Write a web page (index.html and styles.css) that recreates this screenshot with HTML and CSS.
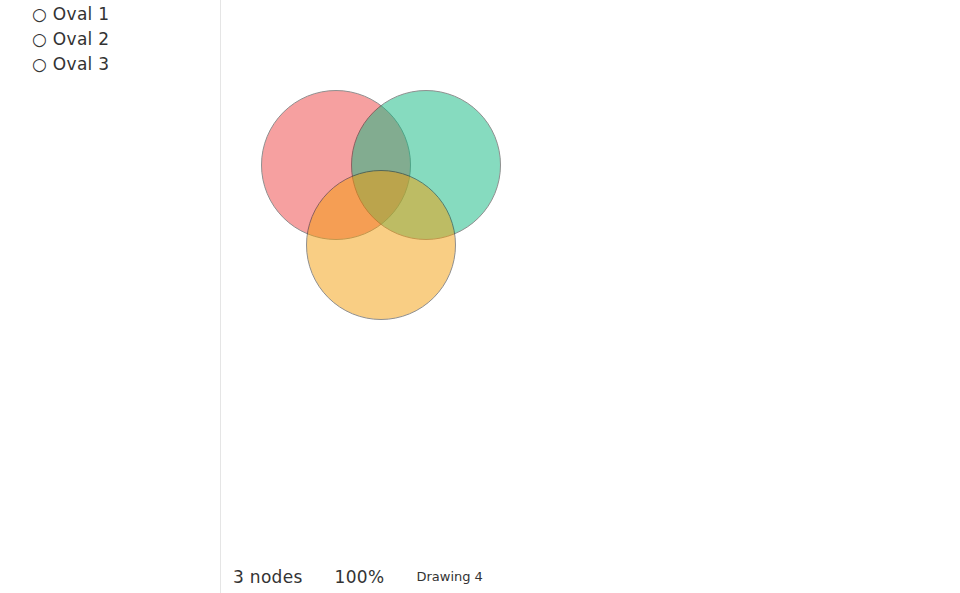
FILE: index.html
```html
<!DOCTYPE html>
<html>
<head>
<meta charset="utf-8">
<link rel="stylesheet" href="styles.css">
</head>
<body>
<div class="app">
  <aside class="sidebar">
    <ul class="layers">
      <li>○ Oval 1</li>
      <li>○ Oval 2</li>
      <li>○ Oval 3</li>
    </ul>
  </aside>
  <main class="main">
    <div class="canvas">
      <svg class="drawing" width="739" height="560" viewBox="0 0 739 560">
        <circle class="node red" cx="115" cy="165" r="74.5"/>
        <circle class="node green" cx="205" cy="165" r="74.5"/>
        <circle class="node orange" cx="160" cy="245" r="74.5"/>
      </svg>
    </div>
    <footer class="status">
      <span class="count">3 nodes</span>
      <span class="zoom">100%</span>
      <span class="title">Drawing 4</span>
    </footer>
  </main>
</div>
</body>
</html>
```
FILE: styles.css
```css
html, body {
  margin: 0;
  padding: 0;
  background: #fff;
}
body {
  font-family: "DejaVu Sans", sans-serif;
  color: #333;
}
.app {
  display: flex;
  width: 960px;
  height: 593px;
}
.sidebar {
  width: 220px;
  flex: none;
  border-right: 1px solid #e5e5e5;
}
.layers {
  list-style: none;
  margin: 0;
  padding: 2px 0 0 32px;
}
.layers li {
  font-size: 17px;
  line-height: 25px;
  letter-spacing: 0.3px;
}
.main {
  flex: 1;
  display: flex;
  flex-direction: column;
}
.canvas {
  flex: 1;
  overflow: hidden;
}
.drawing {
  display: block;
}
.node {
  opacity: 0.5;
  stroke: #222;
  stroke-width: 1;
}
.red { fill: #ef4444; }
.green { fill: #10b981; }
.orange { fill: #f59e0b; }
.status {
  height: 33px;
  display: flex;
  align-items: center;
  gap: 32px;
  padding: 0 12px;
}
.count, .zoom {
  font-size: 17px;
  letter-spacing: 0.3px;
}
.title {
  font-size: 13px;
}
```
